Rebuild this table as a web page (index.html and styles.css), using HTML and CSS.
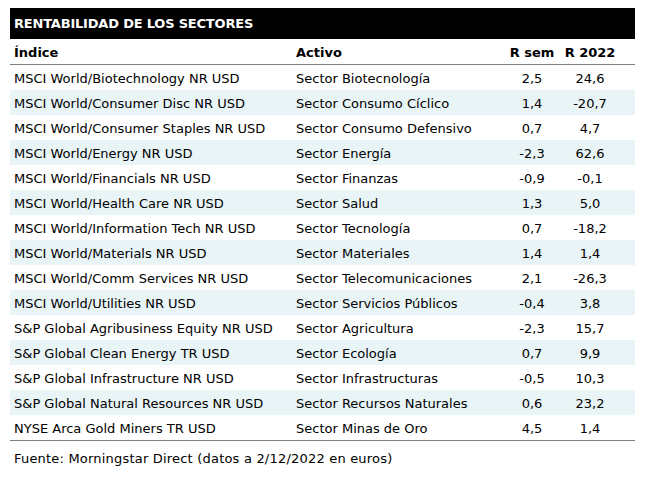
FILE: index.html
```html
<!DOCTYPE html>
<html lang="es">
<head>
<meta charset="utf-8">
<title>Rentabilidad de los sectores</title>
<link rel="stylesheet" href="styles.css">
</head>
<body>
<div class="wrap">
  <div class="title">RENTABILIDAD DE LOS SECTORES</div>
  <div class="table">
    <div class="row head">
      <div class="c c1">Índice</div><div class="c c2">Activo</div><div class="c c3">R sem</div><div class="c c4">R 2022</div><div class="c c5"></div>
    </div>
    <div class="row"><div class="c c1">MSCI World/Biotechnology NR USD</div><div class="c c2">Sector Biotecnología</div><div class="c c3">2,5</div><div class="c c4">24,6</div><div class="c c5"></div></div>
    <div class="row alt"><div class="c c1">MSCI World/Consumer Disc NR USD</div><div class="c c2">Sector Consumo Cíclico</div><div class="c c3">1,4</div><div class="c c4">-20,7</div><div class="c c5"></div></div>
    <div class="row"><div class="c c1">MSCI World/Consumer Staples NR USD</div><div class="c c2">Sector Consumo Defensivo</div><div class="c c3">0,7</div><div class="c c4">4,7</div><div class="c c5"></div></div>
    <div class="row alt"><div class="c c1">MSCI World/Energy NR USD</div><div class="c c2">Sector Energía</div><div class="c c3">-2,3</div><div class="c c4">62,6</div><div class="c c5"></div></div>
    <div class="row"><div class="c c1">MSCI World/Financials NR USD</div><div class="c c2">Sector Finanzas</div><div class="c c3">-0,9</div><div class="c c4">-0,1</div><div class="c c5"></div></div>
    <div class="row alt"><div class="c c1">MSCI World/Health Care NR USD</div><div class="c c2">Sector Salud</div><div class="c c3">1,3</div><div class="c c4">5,0</div><div class="c c5"></div></div>
    <div class="row"><div class="c c1">MSCI World/Information Tech NR USD</div><div class="c c2">Sector Tecnología</div><div class="c c3">0,7</div><div class="c c4">-18,2</div><div class="c c5"></div></div>
    <div class="row alt"><div class="c c1">MSCI World/Materials NR USD</div><div class="c c2">Sector Materiales</div><div class="c c3">1,4</div><div class="c c4">1,4</div><div class="c c5"></div></div>
    <div class="row"><div class="c c1">MSCI World/Comm Services NR USD</div><div class="c c2">Sector Telecomunicaciones</div><div class="c c3">2,1</div><div class="c c4">-26,3</div><div class="c c5"></div></div>
    <div class="row alt"><div class="c c1">MSCI World/Utilities NR USD</div><div class="c c2">Sector Servicios Públicos</div><div class="c c3">-0,4</div><div class="c c4">3,8</div><div class="c c5"></div></div>
    <div class="row"><div class="c c1">S&amp;P Global Agribusiness Equity NR USD</div><div class="c c2">Sector Agricultura</div><div class="c c3">-2,3</div><div class="c c4">15,7</div><div class="c c5"></div></div>
    <div class="row alt"><div class="c c1">S&amp;P Global Clean Energy TR USD</div><div class="c c2">Sector Ecología</div><div class="c c3">0,7</div><div class="c c4">9,9</div><div class="c c5"></div></div>
    <div class="row"><div class="c c1">S&amp;P Global Infrastructure NR USD</div><div class="c c2">Sector Infrastructuras</div><div class="c c3">-0,5</div><div class="c c4">10,3</div><div class="c c5"></div></div>
    <div class="row alt"><div class="c c1">S&amp;P Global Natural Resources NR USD</div><div class="c c2">Sector Recursos Naturales</div><div class="c c3">0,6</div><div class="c c4">23,2</div><div class="c c5"></div></div>
    <div class="row last"><div class="c c1">NYSE Arca Gold Miners TR USD</div><div class="c c2">Sector Minas de Oro</div><div class="c c3">4,5</div><div class="c c4">1,4</div><div class="c c5"></div></div>
  </div>
  <div class="source">Fuente: Morningstar Direct (datos a 2/12/2022 en euros)</div>
</div>
</body>
</html>
```

FILE: styles.css
```css
html, body {
  margin: 0;
  padding: 0;
  background: #ffffff;
}
body {
  font-family: "DejaVu Sans", Verdana, sans-serif;
  font-size: 13px;
  color: #000000;
}
.wrap {
  width: 625px;
  padding: 8px 0 0 10px;
}
.title {
  background: #000000;
  color: #ffffff;
  font-weight: bold;
  height: 31px;
  line-height: 32px;
  padding-left: 4px;
  letter-spacing: -0.2px;
}
.table {
  display: flex;
  flex-direction: column;
}
.row {
  display: grid;
  grid-template-columns: 282px 208px 64px 52px 1fr;
  height: 25px;
  line-height: 27px;
}
.row.alt {
  background: #e9f4f7;
}
.row.head {
  font-weight: bold;
  border-bottom: 1px solid #808080;
}
.row.head .c {
  line-height: 28px;
}
.row.last {
  border-bottom: 1px solid #808080;
}
.c {
  white-space: nowrap;
  overflow: hidden;
}
.c1, .c2 {
  padding-left: 4px;
}
.c3, .c4 {
  text-align: center;
}
.source {
  padding: 5px 0 0 4px;
  line-height: 25px;
  letter-spacing: 0.2px;
}
```
